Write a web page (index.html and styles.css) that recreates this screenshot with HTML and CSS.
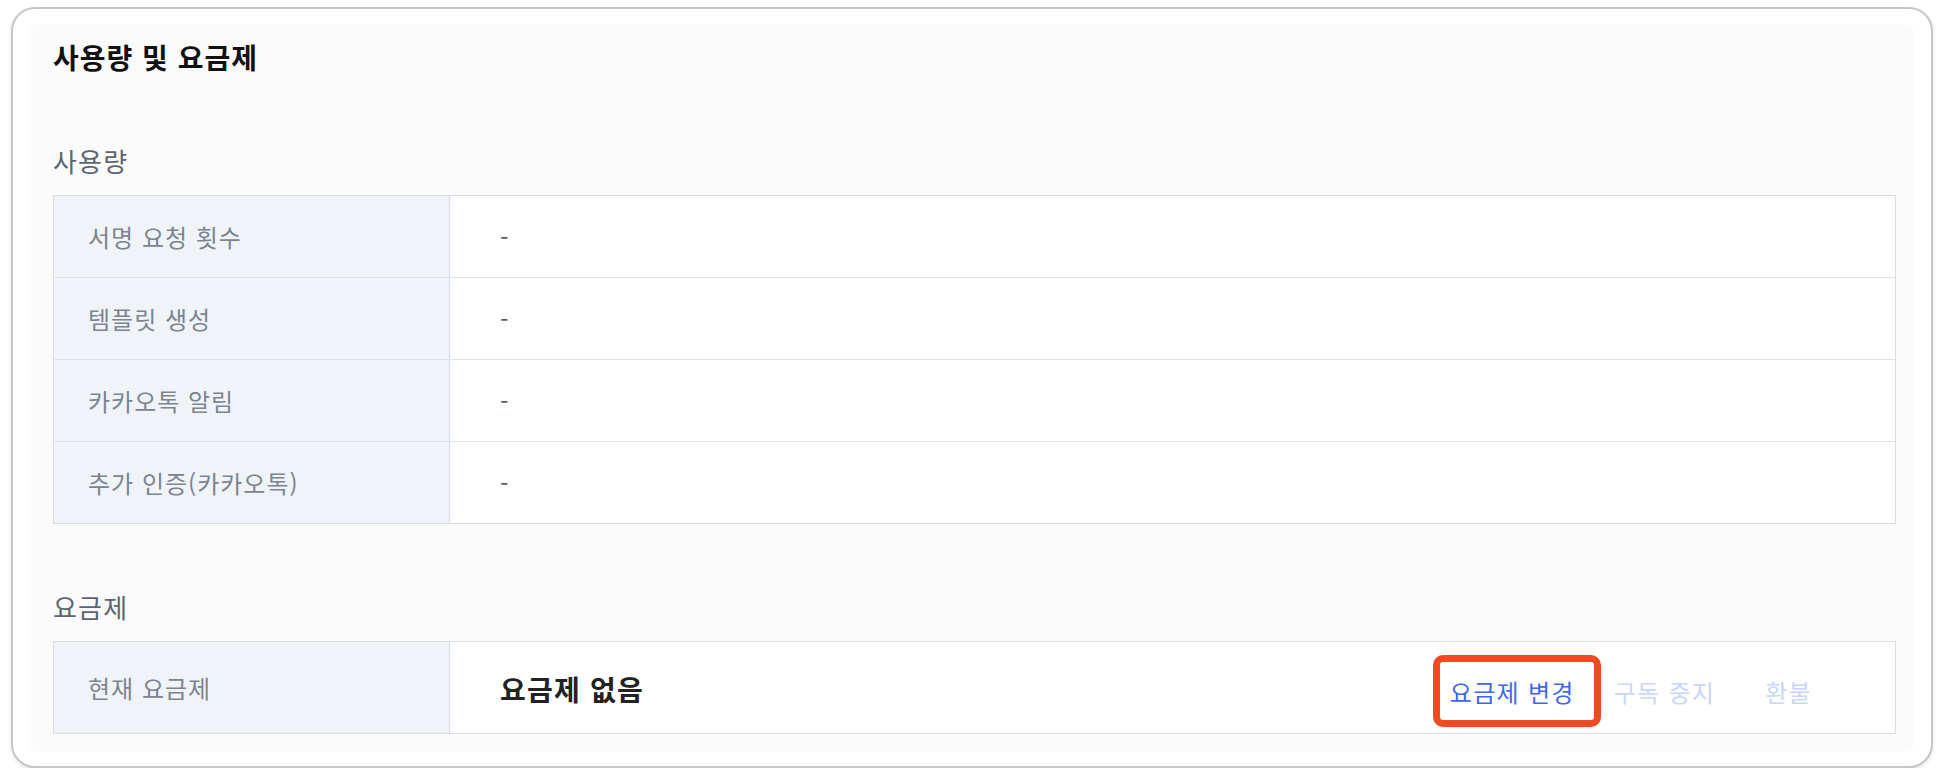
FILE: index.html
```html
<!DOCTYPE html>
<html lang="ko">
	<head>
		<meta charset="utf-8">
		<title>사용량 및 요금제</title>
		<!-- Page styles -->
		<link rel="stylesheet" href="styles.css">
	</head>
	<body>
		<!-- Outer card -->
		<div class="card">
			<div class="panel">
				<h1 class="panel-title">사용량 및 요금제</h1>

				<!-- Usage -->
				<section class="section">
					<h2 class="section-title">사용량</h2>
					<div class="info-table">
						<div class="info-row">
							<div class="info-label">서명 요청 횟수</div>
							<div class="info-value">-</div>
						</div>
						<div class="info-row">
							<div class="info-label">템플릿 생성</div>
							<div class="info-value">-</div>
						</div>
						<div class="info-row">
							<div class="info-label">카카오톡 알림</div>
							<div class="info-value">-</div>
						</div>
						<div class="info-row">
							<div class="info-label">추가 인증(카카오톡)</div>
							<div class="info-value">-</div>
						</div>
					</div>
				</section>

				<!-- Plan -->
				<section class="section plan">
					<h2 class="section-title">요금제</h2>
					<div class="info-table">
						<div class="info-row plan-row">
							<div class="info-label">현재 요금제</div>
							<div class="info-value">
								<span class="plan-name">요금제 없음</span>
								<div class="plan-actions">
									<button class="plan-btn active highlighted">요금제 변경</button>
									<button class="plan-btn stop">구독 중지</button>
									<button class="plan-btn refund">환불</button>
								</div>
							</div>
						</div>
					</div>
				</section>
			</div>
		</div>
	</body>
</html>
```

FILE: styles.css
```css
/*Basic body design*/
body {
	font-family: "Noto Sans CJK KR", "Noto Sans", sans-serif;
	background-color: #fff;
	margin: 0;
}

/*Outer card*/
div.card {
	box-shadow: 0 2px 4px rgba(0, 0, 0, 0.1);
	border: 2px solid #c6c6c6;
	background-color: #fff;
	border-radius: 24px;
	margin: 7px 11px 0 11px;
	padding: 15px 16px 14px 15px;
	box-sizing: border-box;
	height: 761px;
}

/*Inner panel*/
div.panel {
	background-color: #fbfbfb;
	padding: 15px 19px 17px 25px;
	border-radius: 12px;
	height: 100%;
	box-sizing: border-box;
}

/*Panel title*/
h1.panel-title {
	letter-spacing: 1px;
	line-height: 36px;
	font-size: 28px;
	font-weight: 700;
	color: #111;
	margin: 0;
}

/*Section blocks*/
section.section {
	margin-top: 70px;
}

section.section.plan {
	margin-top: 67px;
}

h2.section-title {
	margin: 0 0 18px 0;
	letter-spacing: 1.2px;
	line-height: 32px;
	font-size: 26px;
	font-weight: 400;
	color: #5d6572;
}

/*Table design*/
div.info-table {
	border: 1px solid #d7dde3;
	background-color: #fff;
}

div.info-row {
	display: flex;
	height: 82px;
	border-top: 1px solid #dde2e7;
	box-sizing: border-box;
}

div.info-row:first-child {
	border-top: none;
	height: 81px;
}

div.info-row.plan-row {
	height: 91px;
}

div.info-label {
	background-color: #f0f4f8;
	border-right: 1px solid #d2dae1;
	padding-left: 34px;
	width: 361px;
	flex-shrink: 0;
	display: flex;
	align-items: center;
	letter-spacing: 1px;
	font-size: 24px;
	color: #7b8490;
}

div.info-value {
	flex: 1;
	display: flex;
	align-items: center;
	padding-left: 50px;
	font-size: 24px;
	color: #555d6b;
}

/*Plan row*/
span.plan-name {
	letter-spacing: 1.2px;
	font-size: 28px;
	font-weight: 700;
	color: #222;
	padding-top: 2px;
}

div.plan-actions {
	margin-left: auto;
	display: flex;
	align-items: center;
	padding-right: 67px;
	padding-top: 7px;
}

button.plan-btn {
	font-family: inherit;
	letter-spacing: 1.3px;
	background: none;
	border: none;
	padding: 0 16px;
	height: 72px;
	font-size: 24px;
	color: #c9d6fb;
	cursor: pointer;
}

button.plan-btn.active {
	color: #3f66f0;
	padding: 0 26px 0 17px;
	position: relative;
}

button.plan-btn.stop {
	padding-left: 13px;
}

button.plan-btn.refund {
	margin-left: 18px;
}

/*Highlight frame around the selected action*/
button.plan-btn.highlighted::after {
	content: "";
	position: absolute;
	inset: 0;
	border: 7px solid #f04a23;
	border-radius: 10px;
}
```
